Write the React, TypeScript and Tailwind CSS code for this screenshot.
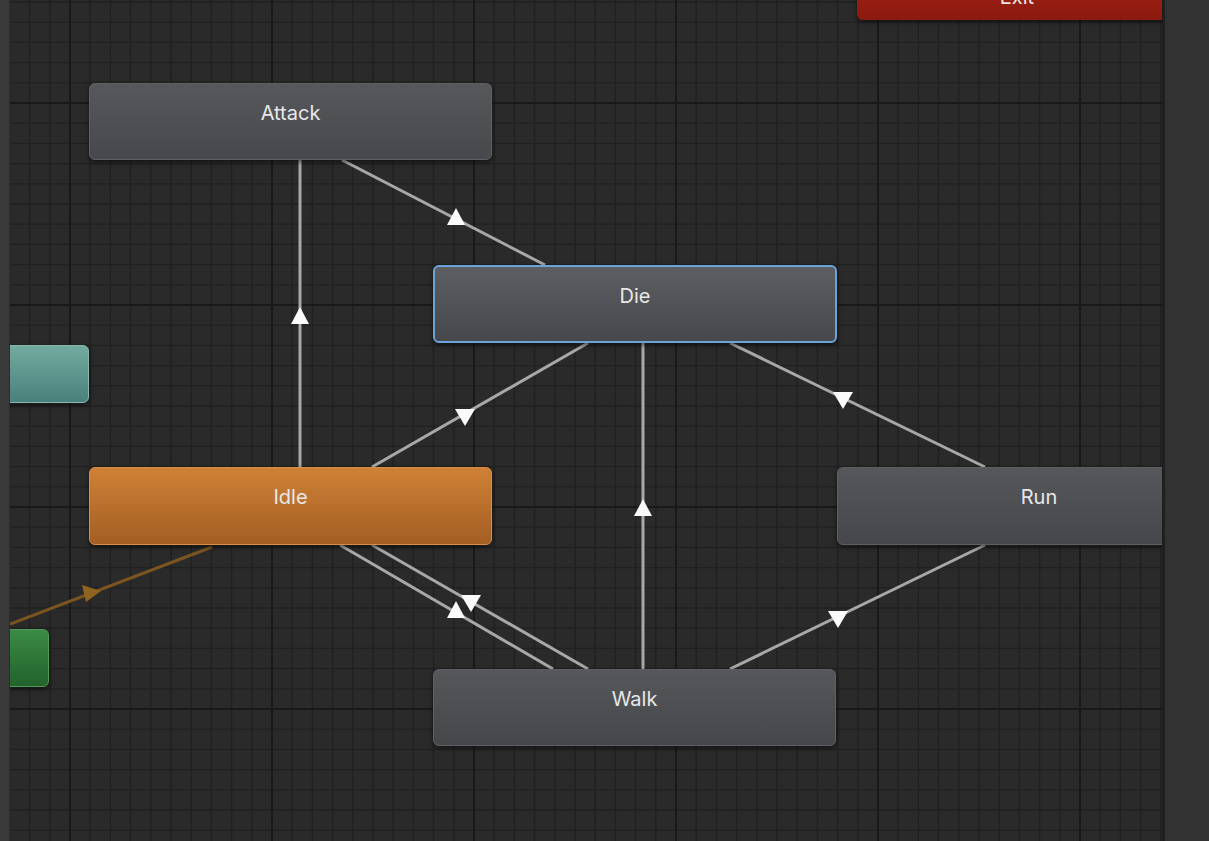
import React from 'react';

// canvas runs from x=10 to x=1165 of the page; coordinates below are page coords
const CELL = 20.2;
const MAJOR_X = 70;
const MAJOR_Y = 103;

type Tri = { x: number; y: number; dir: 'up' | 'down' };

const edges: [number, number, number, number][] = [
  [300, 160, 300, 467],
  [342, 160, 545, 265],
  [588, 343, 372, 467],
  [643, 343, 643, 669],
  [730, 343, 985, 467],
  [340, 545, 553, 669],
  [372, 545, 588, 669],
  [730, 669, 985, 545],
];

const arrows: Tri[] = [
  { x: 456, y: 217, dir: 'up' },
  { x: 300, y: 316, dir: 'up' },
  { x: 465, y: 417, dir: 'down' },
  { x: 643, y: 508, dir: 'up' },
  { x: 843, y: 400, dir: 'down' },
  { x: 456, y: 610, dir: 'up' },
  { x: 471, y: 603, dir: 'down' },
  { x: 838, y: 619, dir: 'down' },
];

const triPoints = ({ x, y, dir }: Tri) =>
  dir === 'up'
    ? `${x},${y - 9} ${x - 9},${y + 8} ${x + 9},${y + 8}`
    : `${x - 10},${y - 8} ${x + 10},${y - 8} ${x},${y + 9}`;

function Grid() {
  const minorX: number[] = [];
  const minorY: number[] = [];
  for (let x = MAJOR_X - CELL * 3; x < 1170; x += CELL) minorX.push(x);
  for (let y = MAJOR_Y - CELL * 5; y < 845; y += CELL) minorY.push(y);
  const majorX = [70, 272, 474, 676, 878, 1080];
  const majorY = [103, 305, 507, 709];
  return (
    <g>
      {minorX.map((x) => (
        <line key={'vx' + x} x1={x} y1={0} x2={x} y2={841} stroke="#202020" strokeWidth={1.3} />
      ))}
      {minorY.map((y) => (
        <line key={'hy' + y} x1={0} y1={y} x2={1170} y2={y} stroke="#202020" strokeWidth={1.3} />
      ))}
      {majorX.map((x) => (
        <line key={'mx' + x} x1={x} y1={0} x2={x} y2={841} stroke="#191919" strokeWidth={2} />
      ))}
      {majorY.map((y) => (
        <line key={'my' + y} x1={0} y1={y} x2={1170} y2={y} stroke="#191919" strokeWidth={2} />
      ))}
    </g>
  );
}

const StateNode = ({ label, className }: { label?: string; className: string }) => (
  <div
    className={
      'absolute flex justify-center rounded-[6px] pt-[15px] text-[20px] leading-[28px] text-[#e8e8e8] shadow-[0_2px_5px_rgba(0,0,0,0.55)] ' +
      className
    }
    style={{ fontFamily: 'Inter, "Noto Sans", sans-serif' }}
  >
    {label}
  </div>
);

export default function App() {
  return (
    <div className="flex h-[841px] w-[1209px] overflow-hidden bg-[#323232]">
      <div className="w-[10px] shrink-0 border-r border-[#2c2c2c] bg-[#3a3a3a]" />
      <div className="relative h-full w-[1155px] shrink-0 overflow-hidden border-r-[3px] border-[#1f1f1f] bg-[#2a2a2a]">
        <svg className="absolute inset-0" width={1155} height={841} viewBox="10 0 1155 841">
          <Grid />
          {edges.map(([x1, y1, x2, y2], i) => (
            <line key={i} x1={x1} y1={y1} x2={x2} y2={y2} stroke="#a8a8a8" strokeWidth={3} />
          ))}
          <line x1={10} y1={624} x2={212} y2={547} stroke="#7a551f" strokeWidth={3} />
          <polygon points="82,585 101,591 86,602" fill="#8f6320" />
          {arrows.map((a, i) => (
            <polygon key={i} points={triPoints(a)} fill="#fafafa" />
          ))}
        </svg>

        {/* Exit */}
        <StateNode
          label="Exit"
          className="left-[847px] top-[-32px] h-[52px] w-[320px] bg-gradient-to-b from-[#b02414] to-[#8a1a10]"
        />
        {/* Any State */}
        <StateNode className="left-[-121px] top-[345px] h-[58px] w-[200px] border border-[#88bbb0] bg-gradient-to-b from-[#72ab9f] to-[#4a807c]" />
        {/* Entry */}
        <StateNode className="left-[-161px] top-[629px] h-[58px] w-[200px] border border-[#4f9a58] bg-gradient-to-b from-[#3a8b45] to-[#23622c]" />

        <StateNode
          label="Attack"
          className="left-[79px] top-[83px] h-[77px] w-[403px] border border-[#5e6065] bg-gradient-to-b from-[#56585c] to-[#46484c]"
        />
        <StateNode
          label="Die"
          className="left-[423px] top-[265px] h-[78px] w-[404px] border-2 border-[#6aa3d8] bg-gradient-to-b from-[#5c5e62] to-[#46484c] shadow-[0_0_8px_3px_rgba(70,140,210,0.7)]"
        />
        <StateNode
          label="Idle"
          className="left-[79px] top-[467px] h-[78px] w-[403px] border border-[#d88d48] bg-gradient-to-b from-[#cf8236] to-[#a35e22]"
        />
        <StateNode
          label="Run"
          className="left-[827px] top-[467px] h-[78px] w-[404px] border border-[#5e6065] bg-gradient-to-b from-[#55575b] to-[#45474b]"
        />
        <StateNode
          label="Walk"
          className="left-[423px] top-[669px] h-[77px] w-[403px] border border-[#5e6065] bg-gradient-to-b from-[#55575b] to-[#45474b]"
        />
      </div>
      <div className="flex-1 bg-[#323232]" />
    </div>
  );
}
